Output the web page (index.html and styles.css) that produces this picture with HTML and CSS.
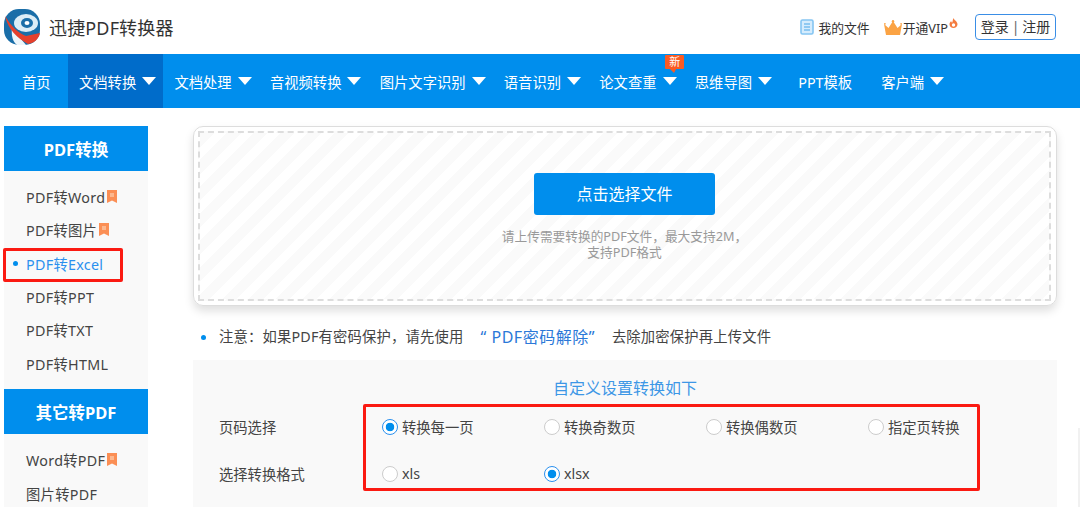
FILE: index.html
```html
<!DOCTYPE html>
<html lang="zh-CN">
<head>
    <meta charset="UTF-8">
    <meta name="viewport" content="width=device-width, initial-scale=1.0">
    <title>迅捷PDF转换器</title>
    <link rel="stylesheet" href="styles.css">
</head>
<body>
    <header class="top">
        <div class="brand">
            <svg class="logo" width="36" height="36" viewBox="0 0 36 36">
                <rect width="36" height="36" rx="15" fill="#1a6ea8"/>
                <ellipse cx="22" cy="14" rx="12" ry="9" fill="#dcedf6"/>
                <ellipse cx="23" cy="14" rx="6" ry="5" fill="#1a6ea8"/>
                <ellipse cx="23" cy="14" rx="2.500" ry="2" fill="#fff"/>
                <path d="M8 19L22 36H13C9 33 7 27 8 19Z" fill="#eef6fb"/>
                <path d="M1 7C7 17 14 24 22 27L36 24C35 30 30 34 24 35C13 29 4 20 1 7Z" fill="#e5402c"/>
            </svg>
            <span class="brand-name">迅捷PDF转换器</span>
        </div>
        <div class="top-right">
            <a class="top-link">
                <svg width="14" height="16" viewBox="0 0 14 16"><rect x="1" y="1" width="12" height="14" rx="1.500" fill="#d5ecfd" stroke="#85c5f2" stroke-width="1.600"/><path d="M4 5h6M4 8h6M4 11h6" stroke="#4aa6e8" stroke-width="1.200"/></svg>
                我的文件
            </a>
            <a class="top-link vip">
                <svg width="18" height="15" viewBox="0 0 18 15"><path d="M0 4L4.500 8L9 1L13.500 8L18 4L16 15H2Z" fill="#fba344"/><circle cx="9" cy="1.200" r="1.200" fill="#fba344"/><circle cx=".9" cy="3.800" r=".9" fill="#fba344"/><circle cx="17.100" cy="3.800" r=".9" fill="#fba344"/></svg>
                <span>开通VIP</span>
                <svg class="fire" width="9" height="10" viewBox="0 0 9 10"><path d="M4.500 0C5 2 8.500 3.500 8.500 6.300C8.500 8.500 6.700 10 4.500 10C2.300 10 .5 8.500 .5 6.300C.5 4.800 1.300 3.800 2.200 3C2.300 4 2.800 4.500 3.300 4.500C3.800 3 3.700 1.500 4.500 0Z" fill="#f47b3e"/><circle cx="4.500" cy="7" r="1.700" fill="#fff"/></svg>
            </a>
            <a class="login">登录<i>|</i>注册</a>
        </div>
    </header>

    <nav class="nav">
        <a class="nav-item plain home">首页</a>
        <a class="nav-item on">文档转换<b class="caret"></b></a>
        <a class="nav-item">文档处理<b class="caret"></b></a>
        <a class="nav-item">音视频转换<b class="caret"></b></a>
        <a class="nav-item">图片文字识别<b class="caret"></b></a>
        <a class="nav-item">语音识别<b class="caret"></b></a>
        <a class="nav-item">论文查重<b class="caret"></b><em class="new">新</em></a>
        <a class="nav-item">思维导图<b class="caret"></b></a>
        <a class="nav-item plain tpl">PPT模板</a>
        <a class="nav-item">客户端<b class="caret"></b></a>
    </nav>

    <div class="wrap">
        <aside class="side">
            <h3>PDF转换</h3>
            <ul>
                <li>PDF转Word<svg class="tag" width="10" height="13" viewBox="0 0 10 13"><path d="M0 0H10V13L5 10.500L0 13Z" fill="#fb8f55"/><rect x="3" y="3" width="4" height="4" fill="#fcb88f"/></svg></li>
                <li>PDF转图片<svg class="tag" width="10" height="13" viewBox="0 0 10 13"><path d="M0 0H10V13L5 10.500L0 13Z" fill="#fb8f55"/><rect x="3" y="3" width="4" height="4" fill="#fcb88f"/></svg></li>
                <li class="cur">PDF转Excel</li>
                <li>PDF转PPT</li>
                <li>PDF转TXT</li>
                <li>PDF转HTML</li>
            </ul>
            <h3>其它转PDF</h3>
            <ul>
                <li>Word转PDF<svg class="tag" width="10" height="13" viewBox="0 0 10 13"><path d="M0 0H10V13L5 10.500L0 13Z" fill="#fb8f55"/><rect x="3" y="3" width="4" height="4" fill="#fcb88f"/></svg></li>
                <li>图片转PDF</li>
            </ul>
            <div class="mark mark-side"></div>
        </aside>

        <main class="main">
            <section class="upload">
                <div class="upload-in">
                    <button class="pick">点击选择文件</button>
                    <p class="hint">请上传需要转换的PDF文件&#65292;最大支持2M&#65292;<br>支持PDF格式</p>
                </div>
            </section>

            <p class="notice">注意&#65306;如果PDF有密码保护&#65292;请先使用<a>“ PDF密码解除”</a>去除加密保护再上传文件</p>

            <section class="setting">
                <h4>自定义设置转换如下</h4>
                <div class="row">
                    <span class="row-name">页码选择</span>
                    <div class="opts">
                        <label class="opt"><i class="radio checked"></i>转换每一页</label>
                        <label class="opt"><i class="radio"></i>转换奇数页</label>
                        <label class="opt"><i class="radio"></i>转换偶数页</label>
                        <label class="opt"><i class="radio"></i>指定页转换</label>
                    </div>
                </div>
                <div class="row">
                    <span class="row-name">选择转换格式</span>
                    <div class="opts">
                        <label class="opt"><i class="radio"></i>xls</label>
                        <label class="opt"><i class="radio checked"></i>xlsx</label>
                    </div>
                </div>
                <div class="mark mark-form"></div>
            </section>
        </main>
    </div>
    <div class="edge"></div>
</body>
</html>
```

FILE: styles.css
```css
* {
    box-sizing: border-box;
}
html, body {
    margin: 0;
    height: 507px;
    overflow: hidden;
}
body {
    background: #fff;
    color: #444;
    font-family: "Noto Sans", "Noto Sans CJK SC", sans-serif;
    font-size: 14.3px;
}
ul, h3, h4, p {
    margin: 0;
    padding: 0;
}
ul {
    list-style: none;
}

/* header */
.top {
    height: 54px;
    display: flex;
    justify-content: space-between;
    align-items: center;
    padding: 3px 24px 3px 4px;
}
.brand {
    display: flex;
    align-items: center;
    gap: 9px;
}
.brand-name {
    font-size: 18px;
    letter-spacing: .15px;
    color: #333;
}
.top-right {
    display: flex;
    align-items: center;
    font-size: 12.800px;
    color: #333;
}
.top-link {
    display: flex;
    align-items: center;
    gap: 4px;
    margin-right: 14px;
}
.vip {
    gap: 1px;
    margin-right: 17px;
}
.fire {
    margin: -8px 0 0 0;
}
.login {
    width: 81px;
    height: 26px;
    line-height: 24px;
    text-align: center;
    border: 1px solid #3a8ee6;
    border-radius: 4px;
    font-size: 14px;
}
.login i {
    font-style: normal;
    margin: 0 3px;
    color: #666;
}

/* nav */
.nav {
    height: 54px;
    display: flex;
    padding-left: 4px;
    background: #008eed;
    white-space: nowrap;
}
.nav-item {
    position: relative;
    display: flex;
    align-items: center;
    gap: 6px;
    padding: 0 7.300px 0 11px;
    color: #fff;
}
.nav-item.plain {
    padding: 0 18px;
}
.nav-item.home {
    width: 64px;
    padding-right: 0;
}
.nav-item.tpl {
    padding-left: 19px;
}
.nav-item.on {
    background: #006cca;
}
.caret {
    width: 0;
    height: 0;
    border-left: 7.500px solid transparent;
    border-right: 7.500px solid transparent;
    border-top: 8px solid #fff;
}
.new {
    position: absolute;
    top: 1px;
    left: 77px;
    width: 19px;
    height: 14px;
    line-height: 14px;
    text-align: center;
    font-size: 11px;
    font-style: normal;
    background: #fb5a22;
    border-radius: 1px;
}
.new::after {
    content: "";
    position: absolute;
    left: 5px;
    top: 14px;
    border-left: 4px solid transparent;
    border-right: 2px solid transparent;
    border-top: 4px solid #fb5a22;
}

/* page */
.wrap {
    display: flex;
    align-items: flex-start;
    padding: 18px 23px 0 4px;
    gap: 45px;
}
.side {
    position: relative;
    width: 144px;
    flex: none;
    background: #f9f9f9;
}
.side h3 {
    height: 45px;
    padding-top: 1px;
    line-height: 45px;
    text-align: center;
    font-size: 16.500px;
    color: #fff;
    background: #008eed;
}
.side ul {
    padding: 8.600px 0 9.400px 22px;
}
.side li {
    position: relative;
    display: flex;
    align-items: center;
    gap: 2px;
    height: 33.400px;
    letter-spacing: .3px;
}
.side li.cur {
    color: #2a90ee;
}
.side li.cur::before {
    content: "";
    position: absolute;
    left: -13px;
    top: 15px;
    width: 5px;
    height: 5px;
    border-radius: 50%;
    background: #008eed;
}

/* red annotation boxes drawn over the screenshot */
.mark {
    position: absolute;
    border: 3px solid #fb1a12;
    border-radius: 2px;
    pointer-events: none;
}
.mark-side {
    left: -1px;
    top: 122px;
    width: 120px;
    height: 34px;
}
.mark-form {
    left: 170px;
    top: 44px;
    width: 617px;
    height: 87px;
}

/* upload */
.main {
    flex: 1;
}
.upload {
    height: 180px;
    padding: 4px 5px 4px 4px;
    border: 1px solid #ddd;
    border-radius: 10px;
    box-shadow: 0 5px 10px rgba(0, 0, 0, .13);
}
.upload-in {
    height: 170px;
    padding-top: 40px;
    text-align: center;
    border: 2px dashed #ddd;
    background: repeating-linear-gradient(135deg, #fafafa 0, #fafafa 10px, #fff 10px, #fff 19px);
}
.pick {
    width: 181px;
    height: 42px;
    padding: 0 0 2px;
    border: 0;
    border-radius: 3px;
    background: #008eed;
    color: #fff;
    font-family: inherit;
    font-size: 16px;
}
.hint {
    margin-top: 13px;
    font-size: 12.700px;
    line-height: 16px;
    color: #999;
}
.notice {
    position: relative;
    display: flex;
    align-items: center;
    height: 54px;
    padding: 5px 0 0 26px;
    letter-spacing: .2px;
}
.notice::before {
    content: "";
    position: absolute;
    left: 8px;
    top: 29px;
    width: 5px;
    height: 5px;
    border-radius: 50%;
    background: #008eed;
}
.notice a {
    margin: 0 17px;
    font-size: 16px;
    letter-spacing: .5px;
    color: #2b78d8;
}

/* settings */
.setting {
    position: relative;
    height: 147px;
    padding-top: 16px;
    background: #f9f9f9;
}
.setting h4 {
    text-align: center;
    font-size: 16px;
    font-weight: normal;
    line-height: 24px;
    color: #3d97e6;
}
.row {
    display: flex;
    align-items: center;
    height: 47px;
    padding-left: 26px;
}
.row:first-of-type {
    margin-top: 3px;
}
.row-name {
    width: 163px;
}
.opts {
    display: flex;
}
.opt {
    width: 162px;
    display: flex;
    align-items: center;
    gap: 4px;
}
.radio {
    width: 16px;
    height: 16px;
    border: 1px solid #ccc;
    border-radius: 50%;
    background: #fff;
}
.radio.checked {
    border-color: #2a90ee;
    background: radial-gradient(circle, #008eed 0, #008eed 4px, #fff 4.600px);
}

/* faint shadow of a floating panel cut off by the window */
.edge {
    position: fixed;
    right: 0;
    top: 428px;
    bottom: 0;
    width: 2px;
    background: #f1f1f1;
}
```
